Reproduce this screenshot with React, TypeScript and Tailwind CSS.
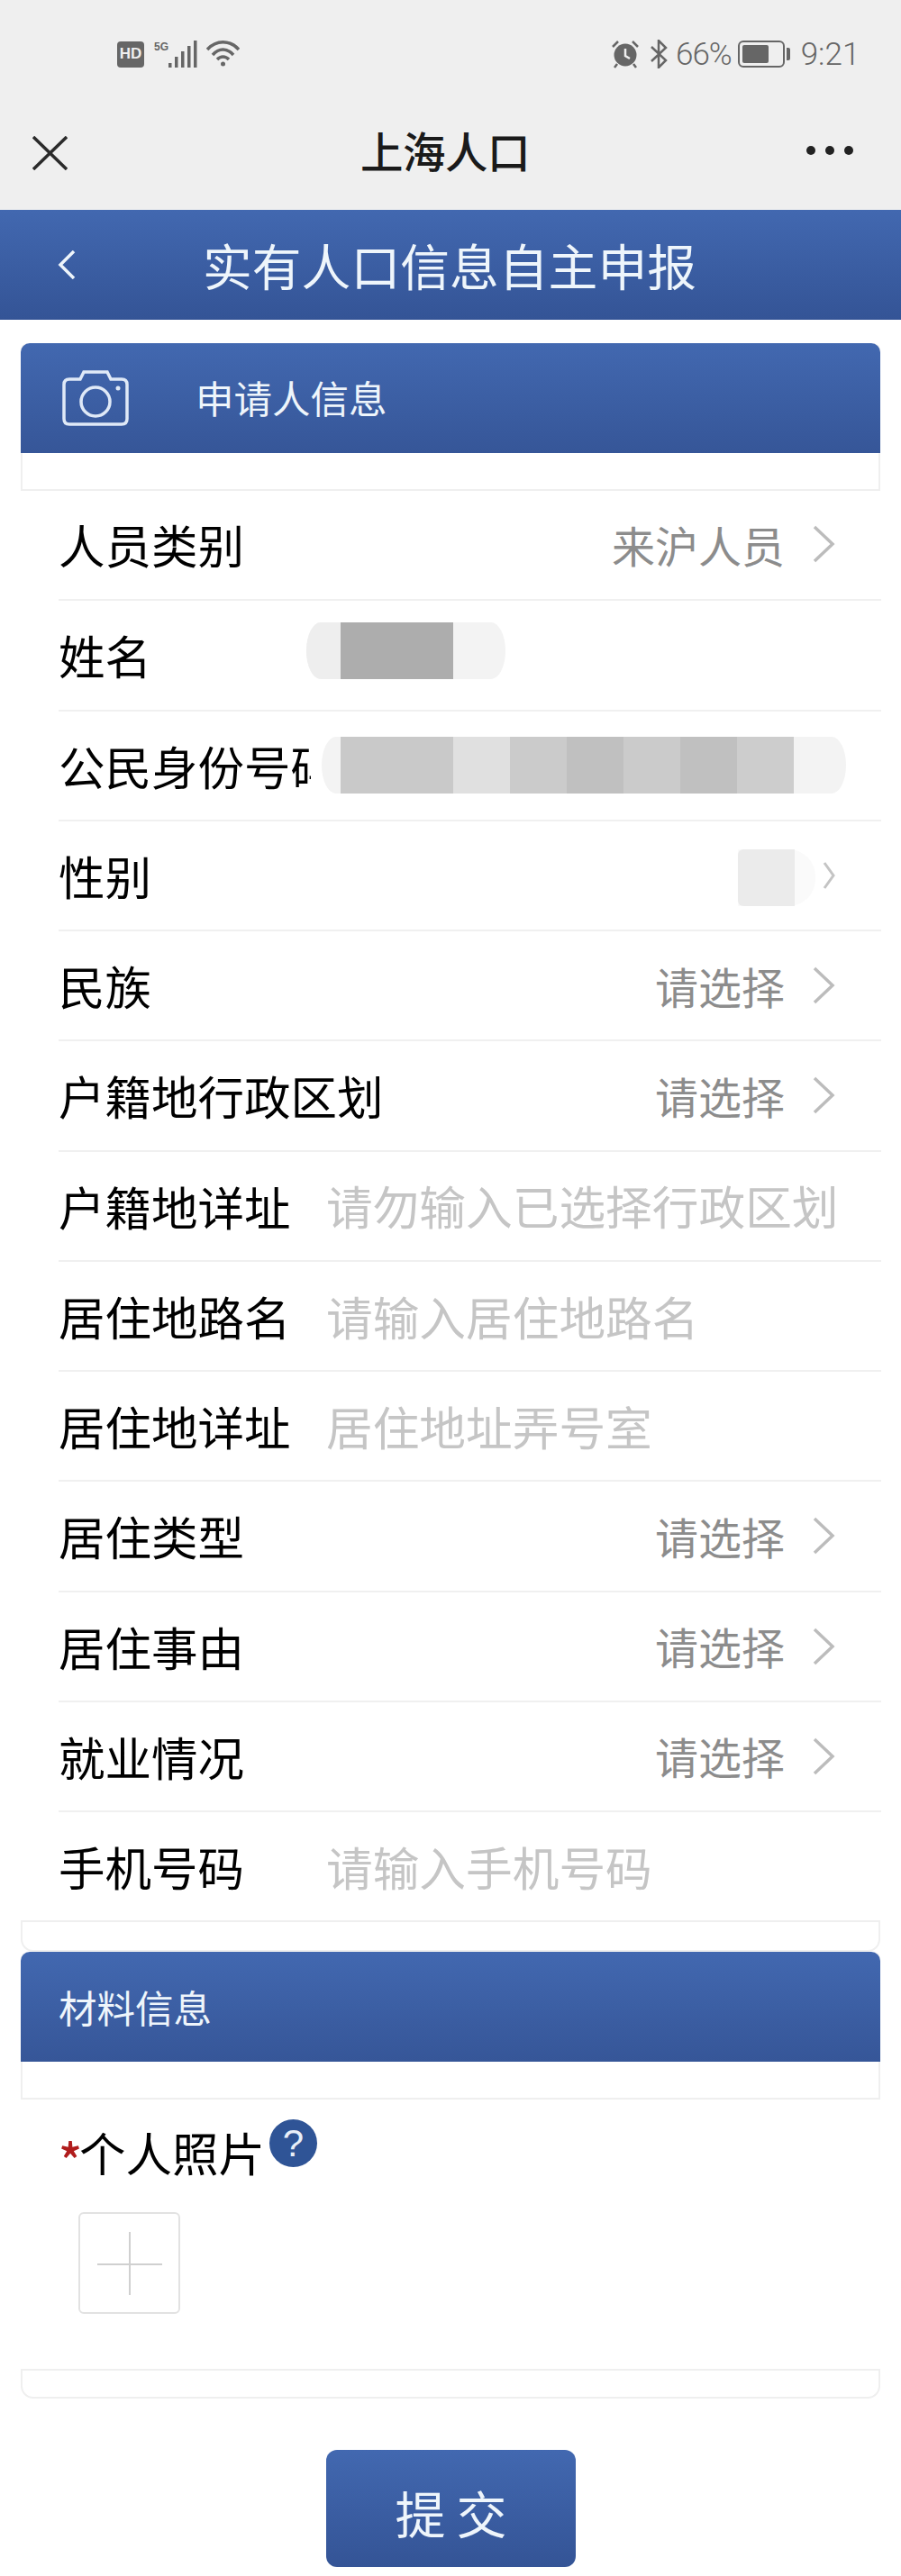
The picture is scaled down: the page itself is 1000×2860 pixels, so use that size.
import React from "react";

const cjk = "font-['Noto_Sans_CJK_SC','Noto_Sans',sans-serif]";

type RowItem =
  | { label: string; kind: "select"; value: string }
  | { label: string; kind: "input"; value: string }
  | { label: string; kind: "name" }
  | { label: string; kind: "id" }
  | { label: string; kind: "gender" };

const rows: RowItem[] = [
  { label: "人员类别", kind: "select", value: "来沪人员" },
  { label: "姓名", kind: "name" },
  { label: "公民身份号码", kind: "id" },
  { label: "性别", kind: "gender" },
  { label: "民族", kind: "select", value: "请选择" },
  { label: "户籍地行政区划", kind: "select", value: "请选择" },
  { label: "户籍地详址", kind: "input", value: "请勿输入已选择行政区划" },
  { label: "居住地路名", kind: "input", value: "请输入居住地路名" },
  { label: "居住地详址", kind: "input", value: "居住地址弄号室" },
  { label: "居住类型", kind: "select", value: "请选择" },
  { label: "居住事由", kind: "select", value: "请选择" },
  { label: "就业情况", kind: "select", value: "请选择" },
  { label: "手机号码", kind: "input", value: "请输入手机号码" },
];

function Chevron() {
  return (
    <svg width="26" height="42" viewBox="0 0 26 42" fill="none" className="shrink-0">
      <path d="M3 2 L23 21 L3 40" stroke="#bcbcbc" strokeWidth="3.5" />
    </svg>
  );
}

function StatusBar() {
  return (
    <div className="flex h-[30px] items-center pl-[130px] text-[#666]">
      <div className="flex h-[29px] w-[30px] items-center justify-center rounded-[4px] bg-[#666] font-['Liberation_Sans',sans-serif] text-[17px] font-bold text-[#efefef]">
        HD
      </div>
      <span className="mb-[16px] ml-[11px] w-[17px] font-['Liberation_Sans',sans-serif] text-[12px] font-bold leading-none">
        5G
      </span>
      <svg width="32" height="30" viewBox="0 0 32 30" fill="#666" className="-ml-[1px]">
        <rect x="0" y="25" width="3.5" height="5" />
        <rect x="7" y="18" width="3.5" height="12" />
        <rect x="14" y="12" width="3.5" height="18" />
        <rect x="21" y="6" width="3.5" height="24" />
        <rect x="28" y="0" width="3.5" height="30" />
      </svg>
      <svg width="37" height="30" viewBox="0 0 37 30" fill="none" stroke="#666" strokeWidth="3.5" className="ml-[10px]">
        <path d="M1 10 C11 -1 26 -1 36 10" />
        <path d="M7 16 C14 8 23 8 30 16" />
        <path d="M12 21 C16 17 21 17 25 21" />
        <circle cx="18.5" cy="26" r="2.5" fill="#666" stroke="none" />
      </svg>
      <svg width="32" height="32" viewBox="0 0 32 32" className="ml-[412px]" fill="#666">
        <circle cx="16" cy="17" r="12.5" />
        <path d="M16 10 V18 L21 21" stroke="#efefef" strokeWidth="2.5" fill="none" />
        <path d="M2 8 L8 2 M30 8 L24 2 M7 27 L4 31 M25 27 L28 31" stroke="#666" strokeWidth="2.5" />
      </svg>
      <svg width="22" height="32" viewBox="0 0 22 32" fill="none" stroke="#666" strokeWidth="2.5" className="ml-[10px]">
        <path d="M3 8 L19 23 L11 31 V1 L19 9 L3 24" />
      </svg>
      <span className="ml-[8px] font-['Roboto',sans-serif] text-[35px] font-light leading-none tracking-[-1px]">66%</span>
      <div className="ml-[7px] flex h-[30px] w-[52px] items-center rounded-[6px] border-[2.5px] border-[#666] pl-[3px]">
        <div className="h-[20px] w-[29px] rounded-[2px] bg-[#666]" />
      </div>
      <div className="ml-[2px] h-[14px] w-[4px] rounded-r-[2px] bg-[#666]" />
      <span className="ml-[12px] font-['Roboto',sans-serif] text-[35px] font-light leading-none">9:21</span>
    </div>
  );
}

function NavBar() {
  return (
    <div className="mt-[73px] flex h-[44px] items-center pl-[36px] pr-[53px]">
      <svg width="39" height="38" viewBox="0 0 39 38" stroke="#2a2a2a" strokeWidth="3.5" className="shrink-0">
        <path d="M1 1 L38 37 M38 1 L1 37" />
      </svg>
      <span className="-mt-[6px] ml-[325px] text-[47.5px] font-medium leading-none tracking-[-0.5px] text-[#1a1a1a]">上海人口</span>
      <div className="-mt-[6px] ml-auto flex gap-[11px]">
        <div className="h-[10px] w-[10px] rounded-full bg-[#222]" />
        <div className="h-[10px] w-[10px] rounded-full bg-[#222]" />
        <div className="h-[10px] w-[10px] rounded-full bg-[#222]" />
      </div>
    </div>
  );
}

function Camera() {
  return (
    <svg width="74" height="62" viewBox="0 0 74 62" fill="none" stroke="#dfe9f7" strokeWidth="3.5" className="shrink-0">
      <path d="M8 10 H20 L24 2 H50 L54 10 H66 Q72 10 72 16 V54 Q72 60 66 60 H8 Q2 60 2 54 V16 Q2 10 8 10 Z" />
      <circle cx="37" cy="35" r="16" />
      <circle cx="62" cy="20" r="2.5" fill="#dfe9f7" stroke="none" />
    </svg>
  );
}

function FormRow({ row, index }: { row: RowItem; index: number }) {
  // the id label is cut off by its column in the picture, the long select label is not
  const labelWidth =
    row.kind === "id" ? "w-[280px] overflow-hidden" : row.label.length > 5 ? "w-[360px]" : "w-[298px]";
  return (
    <div className={`ml-[65px] mr-[22px] flex h-[122.25px] items-center ${index > 0 ? "border-t-2 border-[#f0f0f0]" : ""}`}>
      <div className={`${labelWidth} shrink-0 whitespace-nowrap text-[51.5px] leading-[1.4] text-black`}>
        {row.label}
      </div>
      {row.kind === "input" && (
        <span className="-ml-[1px] whitespace-nowrap text-[51.7px] leading-[1.4] text-[#c5c5c5]">{row.value}</span>
      )}
      {row.kind === "select" && (
        <div className="ml-auto flex items-center pr-[51px]">
          <span className="whitespace-nowrap text-[48px] leading-[1.4] text-[#8c8c8c]">{row.value}</span>
          <div className="ml-[30px]">
            <Chevron />
          </div>
        </div>
      )}
      {row.kind === "name" && (
        <div className="-ml-[23px] mb-[10px] flex h-[63px] w-[221px] overflow-hidden rounded-[16px/50%] bg-[#f3f3f3]">
          <div className="h-full w-[38px] bg-[#eeeeee]" />
          <div className="h-full w-[125px] bg-[#adadad]" />
        </div>
      )}
      {row.kind === "id" && (
        <div className="ml-[12px] flex h-[63px] w-[582px] overflow-hidden rounded-[16px/50%] bg-[#f3f3f3] pl-[21px]">
          <div className="h-full w-[125px] bg-[#c9c9c9]" />
          <div className="h-full w-[63px] bg-[#e0e0e0]" />
          <div className="h-full w-[63px] bg-[#cbcbcb]" />
          <div className="h-full w-[63px] bg-[#c0c0c0]" />
          <div className="h-full w-[63px] bg-[#cbcbcb]" />
          <div className="h-full w-[63px] bg-[#c0c0c0]" />
          <div className="h-full w-[63px] bg-[#cdcdcd]" />
        </div>
      )}
      {row.kind === "gender" && (
        <div className="ml-auto flex items-center pr-[51px]">
          <div className="mt-[6px] flex h-[63px] w-[86px] rounded-r-[30px] bg-[#fafafa]">
            <div className="h-full w-[63px] rounded-l-[6px] bg-[#ebebeb]" />
          </div>
          <svg width="14" height="32" viewBox="0 0 14 32" fill="none" className="ml-[8px]">
            <path d="M2 2 L12 16 L2 30" stroke="#c4c4c4" strokeWidth="3" />
          </svg>
        </div>
      )}
    </div>
  );
}

export default function App() {
  return (
    <div className={`flex h-[2860px] w-[1000px] flex-col overflow-hidden bg-white ${cjk}`}>
      <div className="h-[233px] bg-[#efefef] pt-[45px]">
        <StatusBar />
        <NavBar />
      </div>

      <div className="flex h-[122px] items-center bg-gradient-to-b from-[#4268b0] to-[#345496] pl-[64px] text-[#eef5fb]">
        <svg width="20" height="32" viewBox="0 0 20 32" fill="none" stroke="#eef5fb" strokeWidth="3.5" className="shrink-0">
          <path d="M18 1 L3 16 L18 31" />
        </svg>
        <span className="-mt-[2px] ml-[141px] whitespace-nowrap text-[54.8px] leading-[1.4]">实有人口信息自主申报</span>
      </div>

      <div className="mx-[23px] mt-[26px] h-[164px] shrink-0 rounded-t-[8px] border-x-2 border-b-2 border-[#efefef]">
        <div className="-mx-[2px] flex h-[122px] items-center rounded-t-[10px] bg-gradient-to-b from-[#4268b0] to-[#365698] pl-[46px] text-[#eef5fb]">
          <Camera />
          <span className="-mt-[2px] ml-[74px] whitespace-nowrap text-[42.5px] leading-[1.4]">申请人信息</span>
        </div>
      </div>

      <div className="-mt-[2px] flex flex-col">
        {rows.map((row, i) => (
          <FormRow key={row.label} row={row} index={i} />
        ))}
      </div>

      <div className="mx-[23px] h-[35px] shrink-0 rounded-b-[14px] border-x-2 border-y-2 border-[#efefef]" />

      <div className="mx-[23px] h-[164px] shrink-0 rounded-t-[8px] border-x-2 border-b-2 border-[#efefef]">
        <div className="-mx-[2px] flex h-[122px] items-center rounded-t-[10px] bg-gradient-to-b from-[#4268b0] to-[#365698] pl-[42px] text-[#eef5fb]">
          <span className="-mt-[2px] whitespace-nowrap text-[42.5px] leading-[1.4]">材料信息</span>
        </div>
      </div>

      <div className="ml-[65px] mt-[22px] flex h-[53px] shrink-0 items-start">
        <span className="mt-[12px] w-[23px] text-[54px] font-medium leading-[1.2] text-[#b01c1c]">*</span>
        <span className="whitespace-nowrap text-[51.5px] leading-[1.4] text-black">个人照片</span>
        <div className="ml-[5px] flex h-[53px] w-[53px] items-center justify-center rounded-full bg-[#2f5496] font-['Liberation_Sans',sans-serif] text-[42px] leading-none text-[#e8eef8]">
          ?
        </div>
      </div>

      <div className="ml-[87px] mt-[50px] flex h-[113px] w-[113px] shrink-0 items-center justify-center rounded-[6px] border-2 border-[#e2e2e2]">
        <svg width="72" height="70" viewBox="0 0 72 70" stroke="#d0d0d0" strokeWidth="2">
          <path d="M36 0 V70 M0 36 H72" />
        </svg>
      </div>

      <div className="mx-[23px] mt-[61px] h-[33px] shrink-0 rounded-b-[14px] border-x-2 border-y-2 border-[#efefef]" />

      <div className="mx-auto mt-[57px] flex h-[130px] w-[277px] shrink-0 items-center justify-center rounded-[12px] bg-gradient-to-b from-[#4268b0] to-[#345496] pl-[13px] pt-[8px] text-[56px] leading-[1.4] tracking-[12px] text-[#eef5fb]">
        提交
      </div>
    </div>
  );
}
